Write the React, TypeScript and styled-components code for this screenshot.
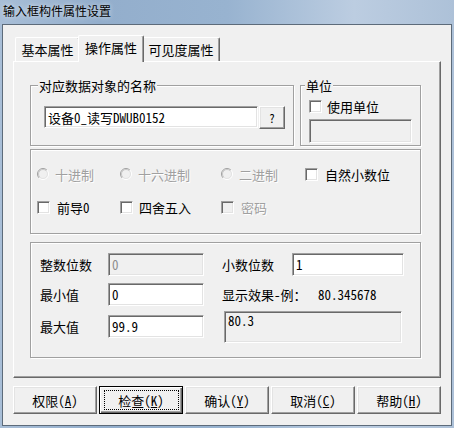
import React from 'react';
import styled, { createGlobalStyle, css } from 'styled-components';

const GlobalStyle = createGlobalStyle`
  html, body { margin: 0; padding: 0; background: #ffffff; }
  body {
    font-family: "Noto Sans Mono CJK SC", "Noto Sans CJK SC", sans-serif;
    font-size: 13px;
    line-height: 13px;
    color: #000;
  }
  * { box-sizing: border-box; }
`;

const Window = styled.div`
  width: 454px;
  height: 428px;
  display: flex;
  flex-direction: column;
  padding: 0 2px 2px 2px;
  background: linear-gradient(90deg, #a8bed7 0%, #93aecc 22%, #98b3d0 50%, #bccde1 78%, #adc1d8 100%);
`;

const TitleBar = styled.div`
  height: 24px;
  display: flex;
  align-items: center;
  padding: 0 0 3px 1px;
  font-family: "Noto Sans CJK SC", sans-serif;
  font-size: 12px;
  line-height: 12px;
  color: #000;
  text-shadow: 0 0 5px rgba(255, 255, 255, 0.75);
`;

const Client = styled.div`
  flex: 1;
  background: #f0f0f0;
  border: 1px solid #5d6b7a;
  padding: 10px 10px 0 10px;
  display: flex;
  flex-direction: column;
`;

const TabStrip = styled.div`
  height: 26px;
  display: flex;
  align-items: flex-end;
  padding-left: 2px;
`;

const Tab = styled.div<{ $w: number; $active?: boolean }>`
  width: ${p => p.$w}px;
  height: 24px;
  display: flex;
  align-items: center;
  justify-content: center;
  background: #f0f0f0;
  border-top: 1px solid #fff;
  border-left: 1px solid #fff;
  border-right: 1px solid #696969;
  border-radius: 2px 2px 0 0;
  box-shadow: inset -1px 0 0 #a0a0a0;
  ${p =>
    p.$active &&
    css`
      height: 27px;
      margin: 0 -2px -1px -2px;
      padding-bottom: 4px;
      position: relative;
      z-index: 1;
    `}
`;

const TabPanel = styled.div`
  height: 317px;
  border-top: 1px solid #fff;
  border-left: 1px solid #fff;
  border-right: 1px solid #696969;
  border-bottom: 1px solid #696969;
  box-shadow: inset -1px -1px 0 #a0a0a0;
  padding: 23px 0 0 16px;
  display: flex;
  flex-direction: column;
`;

const GroupRow = styled.div`
  display: flex;
  gap: 6px;
`;

const GroupBox = styled.div<{ $w: number; $h: number; $mt?: number }>`
  position: relative;
  width: ${p => p.$w}px;
  height: ${p => p.$h}px;
  margin-top: ${p => p.$mt ?? 0}px;
  border: 1px solid #a0a0a0;
  box-shadow: inset 1px 1px 0 #fff, 1px 1px 0 #fff;
`;

const Legend = styled.span<{ $left: number }>`
  position: absolute;
  top: -7px;
  left: ${p => p.$left}px;
  padding: 0 1px;
  background: #f0f0f0;
  white-space: nowrap;
`;

const NameBody = styled.div`
  display: flex;
  align-items: flex-start;
  padding: 20px 0 0 13px;
`;

const Edit = styled.div<{ $w: number; $h: number; $disabled?: boolean }>`
  width: ${p => p.$w}px;
  height: ${p => p.$h}px;
  flex: none;
  display: flex;
  align-items: center;
  padding: 0 3px;
  white-space: nowrap;
  overflow: hidden;
  border: 1px solid;
  border-color: #a0a0a0 #fff #fff #a0a0a0;
  box-shadow: inset 1px 1px 0 #696969, inset -1px -1px 0 #e3e3e3;
  background: ${p => (p.$disabled ? '#f0f0f0' : '#fff')};
  color: ${p => (p.$disabled ? '#8d8d8d' : '#000')};
`;

const raised = css`
  background: #f0f0f0;
  border: 1px solid;
  border-color: #fff #696969 #696969 #fff;
  box-shadow: inset -1px -1px 0 #a0a0a0, inset 1px 1px 0 #e3e3e3;
`;

const SmallButton = styled.div`
  ${raised};
  width: 26px;
  height: 23px;
  margin-left: 1px;
  display: flex;
  align-items: center;
  justify-content: center;
  font-size: 12px;
`;

const UnitBody = styled.div`
  display: flex;
  flex-direction: column;
  padding: 12px 0 0 8px;
`;

const Option = styled.div<{ $disabled?: boolean; $gap?: number }>`
  display: flex;
  align-items: center;
  gap: ${p => p.$gap ?? 6}px;
  height: 16px;
  white-space: nowrap;
  color: ${p => (p.$disabled ? '#a0a0a0' : '#000')};
  text-shadow: ${p => (p.$disabled ? '1px 1px 0 #fff' : 'none')};
`;

const Box = styled.span<{ $disabled?: boolean }>`
  width: 13px;
  height: 13px;
  flex: none;
  border: 1px solid;
  border-color: #a0a0a0 #fff #fff #a0a0a0;
  box-shadow: inset 1px 1px 0 #696969, inset -1px -1px 0 #e3e3e3;
  background: ${p => (p.$disabled ? '#f0f0f0' : '#fff')};
`;

const RadioSvg = styled.svg`
  flex: none;
  display: block;
`;

const OptionsGrid = styled.div`
  display: grid;
  grid-template-columns: 83px 101px 84px auto;
  grid-auto-rows: 16px;
  row-gap: 17px;
  padding: 16px 0 0 6px;
`;

const FieldsBody = styled.div`
  display: flex;
  gap: 18px;
  padding: 10px 0 0 9px;
`;

const Column = styled.div<{ $w?: number }>`
  display: flex;
  flex-direction: column;
  ${p => p.$w && `width: ${p.$w}px;`}
`;

const FieldRow = styled.div<{ $mt?: number }>`
  display: flex;
  align-items: center;
  height: 23px;
  margin-top: ${p => p.$mt ?? 0}px;
  white-space: nowrap;
`;

const FieldLabel = styled.span<{ $w: number }>`
  width: ${p => p.$w}px;
  flex: none;
`;

const Preview = styled.div`
  width: 178px;
  height: 32px;
  margin: 5px 0 0 2px;
  padding: 2px 3px;
  border: 1px solid;
  border-color: #a0a0a0 #fff #fff #a0a0a0;
  box-shadow: inset 1px 1px 0 #696969, inset -1px -1px 0 #e3e3e3;
  background: #f0f0f0;
`;

const ButtonBar = styled.div`
  display: flex;
  gap: 2px;
  margin-top: 8px;
`;

const DlgButton = styled.div<{ $default?: boolean }>`
  ${raised};
  position: relative;
  width: 84px;
  height: 28px;
  display: flex;
  align-items: center;
  justify-content: center;
  white-space: nowrap;
  u { text-decoration-thickness: 1px; text-underline-offset: 1px; }
  ${p =>
    p.$default &&
    css`
      border: 1px solid #000;
      box-shadow: inset 1px 1px 0 #fff, inset -1px -1px 0 #696969, inset -2px -2px 0 #a0a0a0;
      &::after {
        content: '';
        position: absolute;
        inset: 3px 3px 3px 4px;
        border: 1px dotted #000;
      }
    `}
`;

const Radio: React.FC = () => (
  <RadioSvg width="12" height="12" viewBox="0 0 12 12">
    <circle cx="6" cy="6" r="5" fill="#f0f0f0" />
    <path d="M9.9 2.1 A5.5 5.5 0 0 0 2.1 9.9" stroke="#a0a0a0" strokeWidth="1" fill="none" />
    <path d="M2.1 9.9 A5.5 5.5 0 0 0 9.9 2.1" stroke="#ffffff" strokeWidth="1" fill="none" />
    <path d="M9.2 2.8 A4.5 4.5 0 0 0 2.8 9.2" stroke="#c8c8c8" strokeWidth="1" fill="none" />
    <path d="M2.8 9.2 A4.5 4.5 0 0 0 9.2 2.8" stroke="#e3e3e3" strokeWidth="1" fill="none" />
  </RadioSvg>
);

const buttons: { label: string; key: string; def?: boolean }[] = [
  { label: '权限', key: 'A' },
  { label: '检查', key: 'K', def: true },
  { label: '确认', key: 'Y' },
  { label: '取消', key: 'C' },
  { label: '帮助', key: 'H' },
];

export default function App() {
  return (
    <>
      <GlobalStyle />
      <Window>
        <TitleBar>输入框构件属性设置</TitleBar>
        <Client>
          <TabStrip>
            <Tab $w={65}>基本属性</Tab>
            <Tab $w={66} $active>操作属性</Tab>
            <Tab $w={78}>可见度属性</Tab>
          </TabStrip>
          <TabPanel>
            <GroupRow>
              <GroupBox $w={264} $h={61}>
                <Legend $left={7}>对应数据对象的名称</Legend>
                <NameBody>
                  <Edit $w={214} $h={22}>设备0_读写DWUB0152</Edit>
                  <SmallButton>?</SmallButton>
                </NameBody>
              </GroupBox>
              <GroupBox $w={121} $h={61}>
                <Legend $left={4}>单位</Legend>
                <UnitBody>
                  <Option $gap={5}>
                    <Box />
                    <span>使用单位</span>
                  </Option>
                  <Edit $w={103} $h={24} $disabled style={{ marginTop: 5 }} />
                </UnitBody>
              </GroupBox>
            </GroupRow>

            <GroupBox $w={391} $h={85} $mt={3}>
              <OptionsGrid>
                <Option $disabled>
                  <Radio />
                  <span>十进制</span>
                </Option>
                <Option $disabled>
                  <Radio />
                  <span>十六进制</span>
                </Option>
                <Option $disabled>
                  <Radio />
                  <span>二进制</span>
                </Option>
                <Option $gap={7}>
                  <Box />
                  <span>自然小数位</span>
                </Option>
                <Option $gap={7}>
                  <Box />
                  <span>前导0</span>
                </Option>
                <Option>
                  <Box />
                  <span>四舍五入</span>
                </Option>
                <Option $disabled $gap={7}>
                  <Box $disabled />
                  <span>密码</span>
                </Option>
              </OptionsGrid>
            </GroupBox>

            <GroupBox $w={391} $h={116} $mt={8}>
              <FieldsBody>
                <Column $w={164}>
                  <FieldRow>
                    <FieldLabel $w={68}>整数位数</FieldLabel>
                    <Edit $w={96} $h={23} $disabled>0</Edit>
                  </FieldRow>
                  <FieldRow $mt={7}>
                    <FieldLabel $w={68}>最小值</FieldLabel>
                    <Edit $w={96} $h={23}>0</Edit>
                  </FieldRow>
                  <FieldRow $mt={9}>
                    <FieldLabel $w={68}>最大值</FieldLabel>
                    <Edit $w={96} $h={23}>99.9</Edit>
                  </FieldRow>
                </Column>
                <Column>
                  <FieldRow>
                    <FieldLabel $w={70}>小数位数</FieldLabel>
                    <Edit $w={112} $h={23}>1</Edit>
                  </FieldRow>
                  <FieldRow $mt={7}>
                    <FieldLabel $w={96}>显示效果-例：</FieldLabel>
                    <span>80.345678</span>
                  </FieldRow>
                  <Preview>80.3</Preview>
                </Column>
              </FieldsBody>
            </GroupBox>
          </TabPanel>

          <ButtonBar>
            {buttons.map(b => (
              <DlgButton key={b.key} $default={b.def}>
                {b.label}(<u>{b.key}</u>)
              </DlgButton>
            ))}
          </ButtonBar>
        </Client>
      </Window>
    </>
  );
}
